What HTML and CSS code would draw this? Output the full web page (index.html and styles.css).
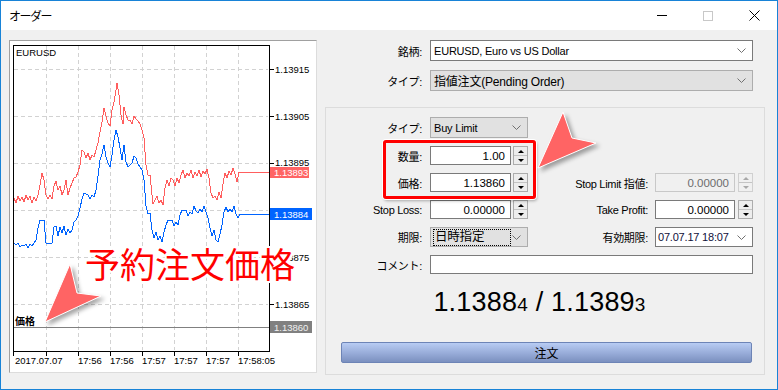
FILE: index.html
```html
<!DOCTYPE html>
<html lang="ja">
<head>
<meta charset="utf-8">
<title>オーダー</title>
<link rel="stylesheet" href="styles.css">
</head>
<body>
<div class="window">
  <div class="titlebar">
    <span class="title">オーダー</span>
    <div class="controls">
      <span class="ctl"><span class="ico-min"></span></span>
      <span class="ctl"><span class="ico-max"></span></span>
      <span class="ctl"><svg width="11" height="11" viewBox="0 0 11 11"><path d="M0.5 0.5L10.5 10.5M10.5 0.5L0.5 10.5" stroke="#000" stroke-width="1" fill="none"/></svg></span>
    </div>
  </div>
  <div class="content">
    <div class="chart-panel">
      <svg class="chart" width="306" height="331" viewBox="10 41 306 331">
        <g stroke="#d2d2d2" stroke-dasharray="4 3" fill="none" shape-rendering="crispEdges">
          <path d="M14 69.5H268M14 116.5H268M14 163.5H268M14 210.5H268M14 257.5H268M14 304.5H268"/>
          <path d="M46.5 46V350M78.5 46V350M110.5 46V350M142.5 46V350M174.5 46V350M206.5 46V350M238.5 46V350"/>
        </g>
        <path d="M14 327.5H269" stroke="#808080" fill="none" shape-rendering="crispEdges"/>
        <polyline fill="none" stroke="#ff5e5e" stroke-width="1" shape-rendering="crispEdges" points="14,198 16,203 18,196 20,201 22,197 24,202 26,195 28,200 30,196 32,203 34,197 36,201 38,195 40,185 42,173 44,180 46,195 48,199 50,195 52,199 54,186 56,181 58,190 60,186 62,195 64,190 66,180 68,195 70,188 72,183 74,178 76,177 78,172 80,165 82,150 84,152 86,158 88,153 90,160 92,155 94,157 96,150 98,143 100,132 102,122 104,108 106,116 108,123 110,126 112,110 114,102 116,90 117,83 119,95 121,115 123,124 124,107 126,115 128,120 130,120 132,124 134,116 136,119 138,121 140,124 142,130 144,138 146,165 148,175 150,175 152,195 153,204 155,200 157,196 159,203 161,200 163,205 165,188 167,180 169,186 171,178 173,180 175,186 177,178 179,183 181,175 183,170 185,178 187,173 189,176 191,170 193,178 195,172 197,176 199,170 201,177 203,171 205,174 207,169 209,178 211,193 213,198 215,196 217,200 219,192 221,198 223,184 225,173 227,178 229,171 231,175 233,168 235,174 237,182 239,172 270,172"/>
        <polyline fill="none" stroke="#0064ff" stroke-width="1" shape-rendering="crispEdges" points="14,243 16,245 18,243 20,247 22,245 24,246 26,244 28,248 30,244 32,246 34,243 36,240 38,228 40,220 44,220 46,243 52,243 54,227 56,226 58,236 60,227 62,233 64,226 66,235 68,229 70,233 72,230 74,222 76,220 78,216 80,208 82,199 84,193 88,195 90,199 92,195 94,197 96,190 98,176 100,160 102,154 104,145 106,157 108,163 110,167 112,155 114,140 116,130 118,137 120,148 122,160 124,145 126,162 128,167 130,165 132,163 134,156 136,158 138,164 140,167 142,170 144,180 146,206 148,214 150,213 152,230 154,238 156,232 158,240 160,236 162,242 164,232 166,225 168,220 172,220 174,226 176,222 178,225 180,215 182,210 186,210 188,216 190,212 192,214 194,206 196,211 198,213 200,209 202,212 204,206 206,212 208,218 210,228 212,236 214,230 216,240 218,242 220,234 222,225 224,212 226,207 228,212 230,209 232,212 234,206 236,214 238,218 240,214 270,214"/>
        <rect x="13.5" y="45.5" width="256" height="306" fill="none" stroke="#000" shape-rendering="crispEdges"/>
        <path d="M270 69.5h4M270 116.5h4M270 163.5h4M270 210.5h4M270 257.5h4M270 304.5h4M13.5 352v4M46.5 352v4M78.5 352v4M110.5 352v4M142.5 352v4M174.5 352v4M206.5 352v4M238.5 352v4" stroke="#000" fill="none" shape-rendering="crispEdges"/>
        <text x="16" y="56">EURUSD</text>
        <text class="ax" x="275" y="72.5">1.13915</text>
        <text class="ax" x="275" y="119.5">1.13905</text>
        <text class="ax" x="275" y="165.5">1.13895</text>
        <text class="ax" x="275" y="213.5">1.13885</text>
        <text class="ax" x="275" y="260.5">1.13875</text>
        <text class="ax" x="275" y="307.5">1.13865</text>
        <rect x="270" y="167" width="39" height="11" fill="#ff6464"/>
        <text class="ax" x="274" y="176" fill="#fff">1.13893</text>
        <rect x="270" y="208" width="42" height="12" fill="#0064ff"/>
        <text class="ax" x="274" y="217.5" fill="#fff">1.13884</text>
        <rect x="270" y="321" width="42" height="12" fill="#808080"/>
        <text class="ax" x="274" y="330.5" fill="#f0f0f0">1.13860</text>
        <text class="jp" x="15" y="325">価格</text>
        <text class="ax" x="15" y="364">2017.07.07</text>
        <text class="ax" x="78" y="364">17:56</text>
        <text class="ax" x="110" y="364">17:56</text>
        <text class="ax" x="142" y="364">17:57</text>
        <text class="ax" x="174" y="364">17:57</text>
        <text class="ax" x="206" y="364">17:57</text>
        <text class="ax" x="238" y="364">17:58:05</text>
      </svg>
    </div>
    <div class="form">
      <div class="top-grid">
        <span class="lbl">銘柄:</span>
        <div class="combo white"><span>EURUSD, Euro vs US Dollar</span><svg class="chev" width="9" height="5" viewBox="0 0 9 5"><polyline points="0.5,0.5 4.5,4.5 8.5,0.5" fill="none" stroke="#707070"/></svg></div>
        <span class="lbl">タイプ:</span>
        <div class="combo"><span class="big">指値注文(Pending Order)</span><svg class="chev" width="9" height="5" viewBox="0 0 9 5"><polyline points="0.5,0.5 4.5,4.5 8.5,0.5" fill="none" stroke="#707070"/></svg></div>
      </div>
      <div class="group">
        <div class="grid">
          <span class="lbl">タイプ:</span>
          <div class="combo"><span>Buy Limit</span><svg class="chev" width="9" height="5" viewBox="0 0 9 5"><polyline points="0.5,0.5 4.5,4.5 8.5,0.5" fill="none" stroke="#707070"/></svg></div>
          <span></span><span></span>

          <span class="lbl">数量:</span>
          <div class="spinfield"><div class="input">1.00</div><div class="spin"><span class="up"></span><span class="down"></span></div></div>
          <span></span><span></span>

          <span class="lbl">価格:</span>
          <div class="spinfield"><div class="input">1.13860</div><div class="spin"><span class="up"></span><span class="down"></span></div></div>
          <span class="lbl r">Stop Limit 指値:</span>
          <div class="spinfield right disabled"><div class="input">0.00000</div><div class="spin"><span class="up"></span><span class="down"></span></div></div>

          <span class="lbl">Stop Loss:</span>
          <div class="spinfield"><div class="input">0.00000</div><div class="spin"><span class="up"></span><span class="down"></span></div></div>
          <span class="lbl r">Take Profit:</span>
          <div class="spinfield right"><div class="input">0.00000</div><div class="spin"><span class="up"></span><span class="down"></span></div></div>

          <span class="lbl">期限:</span>
          <div class="combo"><span class="focus">日時指定</span><svg class="chev" width="9" height="5" viewBox="0 0 9 5"><polyline points="0.5,0.5 4.5,4.5 8.5,0.5" fill="none" stroke="#707070"/></svg></div>
          <span class="lbl r">有効期限:</span>
          <div class="combo white date"><span>07.07.17 18:07</span><svg class="chev" width="9" height="5" viewBox="0 0 9 5"><polyline points="0.5,0.5 4.5,4.5 8.5,0.5" fill="none" stroke="#707070"/></svg></div>

          <span class="lbl">コメント:</span>
          <div class="input comment"></div>
        </div>
        <div class="quote">1.1388<small>4</small> / 1.1389<small>3</small></div>
        <button class="order">注文</button>
      </div>
    </div>
  </div>
  <div class="annotations">
    <div class="hl-box"></div>
    <svg class="arrows" width="778" height="390" viewBox="0 0 778 390">
      <path d="M45 322L70 264L77 293L101 296Z"/>
      <path d="M538 168L563 112L572 138L596 143Z"/>
    </svg>
    <div class="big-label">予約注文価格</div>
  </div>
</div>
</body>
</html>
```
FILE: styles.css
```css
* { box-sizing: border-box; }
body {
  margin: 0;
  font-family: "Liberation Sans", "Noto Sans CJK JP", sans-serif;
  font-size: 11px;
  color: #000;
}
.window {
  position: relative;
  width: 778px;
  height: 390px;
  border: 1px solid #1883d7;
  background: #f0f0f0;
  display: flex;
  flex-direction: column;
}
.titlebar {
  height: 29px;
  background: #fff;
  display: flex;
  align-items: center;
  justify-content: space-between;
  padding-left: 8px;
}
.title {
  font-family: "Noto Sans CJK JP", sans-serif;
  font-size: 12px;
  letter-spacing: -1.5px;
}
.controls { display: flex; height: 100%; }
.ctl {
  width: 46px;
  display: flex;
  align-items: center;
  justify-content: center;
}
.ico-min { width: 10px; height: 1px; background: #000; }
.ico-max { width: 10px; height: 10px; border: 1px solid #c8c8c8; }
.content {
  display: flex;
  padding: 10px 0 0 8px;
}
.chart-panel {
  width: 308px;
  height: 333px;
  border: 1px solid #a0a0a0;
  border-right-color: #dcdcdc;
  border-bottom-color: #dcdcdc;
  background: #fff;
}
.chart { display: block; }
.chart text {
  font-family: "Liberation Sans", sans-serif;
  font-size: 9.5px;
  fill: #000;
}
.chart text.jp {
  font-family: "Noto Sans CJK JP", sans-serif;
  font-size: 10px;
  font-weight: 700;
}
.chart text[fill="#fff"] { fill: #fff; }
.chart text[fill="#f0f0f0"] { fill: #f0f0f0; }

.form { margin-left: 8px; width: 440px; }
.top-grid {
  display: grid;
  grid-template-columns: 105px 323px;
  grid-auto-rows: 21px;
  row-gap: 9px;
}
.lbl {
  display: flex;
  align-items: center;
  justify-content: flex-end;
  padding-right: 8px;
  white-space: nowrap;
  letter-spacing: -0.3px;
}
.lbl.r { padding-right: 7px; }
.combo {
  display: flex;
  align-items: center;
  justify-content: space-between;
  border: 1px solid #adadad;
  background: #e1e1e1;
  padding: 0 6px 0 3px;
  white-space: nowrap;
  letter-spacing: -0.2px;
}
.combo.white { background: #fff; border-color: #7a7a7a; }
.combo .big { font-size: 12px; }
.combo.date { padding-left: 2px; color: #10103a; }
.chev { flex: none; }
.focus {
  font-size: 12.5px;
  outline: 1px dotted #000;
  outline-offset: 0;
  width: 76px;
  line-height: 15px;
  padding-left: 1px;
}
.group {
  margin-top: 16px;
  border: 1px solid #dcdcdc;
  padding: 9px 11px 11px 0;
}
.grid {
  display: grid;
  grid-template-columns: 104px 98px 127px 98px;
  grid-template-rows: 21px 19px 19px 19px 20px 19px;
  row-gap: 8px;
}
.input {
  border: 1px solid #7a7a7a;
  background: #fff;
  display: flex;
  align-items: center;
  justify-content: flex-end;
  padding-right: 5px;
  font-size: 11.5px;
}
.input.comment { grid-column: 2 / 5; }
.spinfield { display: flex; gap: 2px; }
.spinfield .input { width: 81px; }
.spinfield.right { gap: 3px; }
.spinfield.right .input { width: 80px; }
.spin {
  width: 15px;
  border: 1px solid #acacac;
  background: #ededed;
  display: flex;
  flex-direction: column;
}
.spin span {
  flex: 1;
  display: flex;
  align-items: center;
  justify-content: center;
}
.spin span + span { border-top: 1px solid #c4c4c4; }
.spin .up::before {
  content: "";
  border-left: 3.5px solid transparent;
  border-right: 3.5px solid transparent;
  border-bottom: 3px solid #000;
}
.spin .down::before {
  content: "";
  border-left: 3.5px solid transparent;
  border-right: 3.5px solid transparent;
  border-top: 3px solid #000;
}
.disabled .input { background: #f0f0f0; border-color: #c8c8c8; color: #6d6d6d; }
.disabled .spin { border-color: #d0d0d0; background: #f0f0f0; }
.disabled .spin .up::before { border-bottom-color: #a8a8a8; }
.disabled .spin .down::before { border-top-color: #a8a8a8; }

.quote {
  margin-top: 13px;
  text-align: center;
  font-size: 27px;
  line-height: 30px;
  letter-spacing: 0.2px;
}
.quote small { font-size: 19px; }
.order {
  display: block;
  margin: 22px 0 0 15px;
  width: 411px;
  height: 21px;
  padding: 0;
  border: 1px solid #6d84b6;
  border-radius: 2px;
  background: linear-gradient(#b8ccf3, #97abd8 55%, #7b90bf);
  font-family: "Noto Sans CJK JP", sans-serif;
  font-size: 12px;
  color: #000;
}

.annotations {
  position: absolute;
  inset: 0;
  pointer-events: none;
}
.hl-box {
  position: absolute;
  left: 382px;
  top: 139px;
  width: 153px;
  height: 59px;
  border: 3px solid #ff0000;
  border-radius: 3px;
  box-shadow: 0 0 0 1px #fff, 1px 2px 3px rgba(0,0,0,0.3);
}
.arrows {
  position: absolute;
  left: -1px;
  top: -1px;
}
.arrows path {
  fill: #ff6464;
  stroke: #fff;
  stroke-width: 1;
  filter: drop-shadow(3px 3px 2px rgba(0,0,0,0.35));
}
.big-label {
  position: absolute;
  left: 84px;
  top: 244px;
  font-family: "Noto Sans CJK JP", sans-serif;
  font-size: 35px;
  line-height: 1;
  color: #ff0000;
  white-space: nowrap;
  text-shadow: 1px 0 0 #fff, -1px 0 0 #fff, 0 1px 0 #fff, 0 -1px 0 #fff,
    2px 2px 0 #fff, -2px -2px 0 #fff, 2px -2px 0 #fff, -2px 2px 0 #fff,
    2px 0 0 #fff, -2px 0 0 #fff, 0 2px 0 #fff, 0 -2px 0 #fff;
}
```
